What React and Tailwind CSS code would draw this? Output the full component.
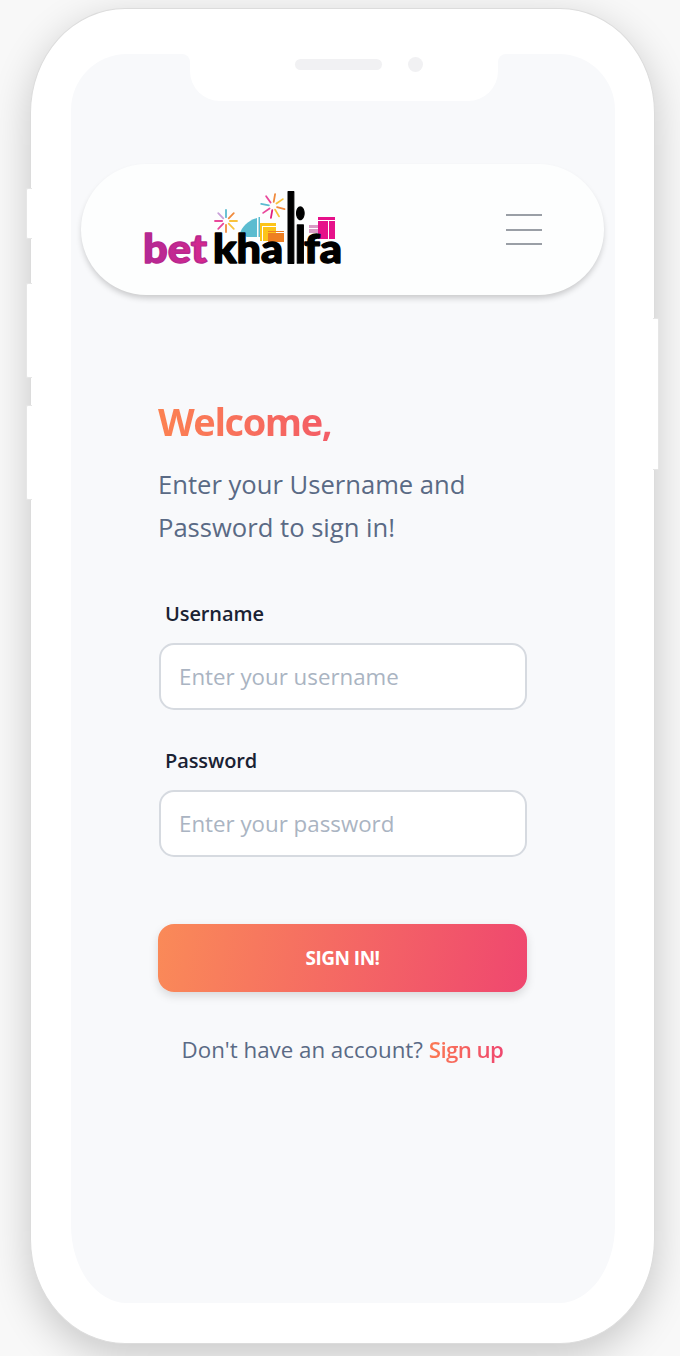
import React from 'react';

const Burst = ({ cx, cy, r, rays }) => (
  <g strokeWidth="1.8" strokeLinecap="round">
    {rays.map(([deg, color]) => {
      const a = (deg * Math.PI) / 180;
      return (
        <line
          key={deg}
          x1={cx + Math.cos(a) * r * 0.35}
          y1={cy + Math.sin(a) * r * 0.35}
          x2={cx + Math.cos(a) * r}
          y2={cy + Math.sin(a) * r}
          stroke={color}
        />
      );
    })}
  </g>
);

const Logo = () => (
  <svg width="200" height="90" viewBox="0 -6 200 90" className="block overflow-visible">
    <defs>
      <linearGradient id="bet" x1="0" y1="0" x2="1" y2="0">
        <stop offset="0" stopColor="#b02a96" />
        <stop offset="1" stopColor="#d8278c" />
      </linearGradient>
    </defs>
    <Burst cx={82} cy={30} r={11} rays={[[0, '#f9c23c'], [45, '#f9c23c'], [90, '#f08a3c'], [135, '#e9489b'], [180, '#e9489b'], [225, '#c9a0d8'], [270, '#5bbcd0'], [315, '#f08a3c']]} />
    <Burst cx={129} cy={15} r={12} rays={[[15, '#f08a3c'], [60, '#f9c23c'], [100, '#e0207f'], [145, '#e9489b'], [190, '#5bbcd0'], [235, '#e9489b'], [280, '#f08a3c'], [325, '#f9c23c']]} />
    {/* city skyline */}
    <path d="M96 43 C97 36 105 29 113 27 L113 46 L103 46 Z" fill="#5bbcd0" />
    <rect x="114.5" y="26" width="1.5" height="20" fill="#5bbcd0" />
    <rect x="116" y="32" width="16" height="18" fill="#fcc419" />
    <rect x="118" y="35" width="1" height="15" fill="#fff" />
    <rect x="119" y="35" width="13" height="1" fill="#fff" />
    <rect x="124" y="42" width="16" height="9" fill="#ee7f22" />
    <rect x="124" y="40" width="16" height="1" fill="#ee7f22" />
    <rect x="165" y="34" width="9" height="8" fill="#d99ac4" />
    <rect x="165" y="37" width="9" height="1" fill="#fff" />
    <rect x="174" y="26" width="17" height="22" fill="#e6118a" />
    <rect x="174" y="29" width="17" height="1" fill="#fff" />
    <rect x="184" y="30" width="1" height="18" fill="#fff" />
    <g fontFamily="Lato, sans-serif" fontWeight="900" fontSize="40" strokeLinejoin="round">
      <text x="-1" y="71.5" fill="url(#bet)" stroke="#b8288f" strokeWidth="1.4" textLength="64" lengthAdjust="spacingAndGlyphs">bet</text>
      <g fill="#000" stroke="#000" strokeWidth="1.4">
        <text x="69" y="71.5" textLength="70" lengthAdjust="spacingAndGlyphs">kha</text>
        <text transform="translate(141.5 71.5) scale(1.1 2.42)" fontSize="39" strokeWidth="0.9">l</text>
        <text transform="translate(150.5 71.5) scale(1.15 1.9)" fontSize="39" strokeWidth="0.9">i</text>
        <text x="160" y="71.5" textLength="38" lengthAdjust="spacingAndGlyphs">fa</text>
      </g>
    </g>
  </svg>
);

const Field = ({ label, placeholder, type, className }) => (
  <div className={className}>
    <label className="block pt-[1px] pl-[7px] text-[20px] leading-[28px] font-semibold tracking-[-0.1px] text-[#1a2233]">{label}</label>
    <input
      type={type}
      placeholder={placeholder}
      className="mt-[15px] ml-[1px] block h-[67px] w-[368px] rounded-[15px] border-2 border-[#d6dae0] bg-white px-[18px] text-[22.3px] text-[#1a2233] outline-none placeholder:text-[#aab4c2]"
    />
  </div>
);

export default function App() {
  return (
    <div className="h-[1356px] w-[680px] overflow-hidden bg-[#f8f8f8] pt-[8px] pl-[30px] font-['Open_Sans',sans-serif]">
      {/* phone body */}
      <div className="relative h-[1336px] w-[625px] rounded-[95px/105px] border border-[#dcdcdc] bg-white pt-[45px] pl-[40px] shadow-[0_12px_40px_rgba(0,0,0,0.2)]">
        {/* side buttons */}
        <div className="absolute top-[179px] left-[-5px] h-[51px] w-[6px] rounded-l-[2px] border border-r-0 border-[#e6e6e6] bg-white" />
        <div className="absolute top-[274px] left-[-5px] h-[95px] w-[6px] rounded-l-[2px] border border-r-0 border-[#e6e6e6] bg-white" />
        <div className="absolute top-[396px] left-[-5px] h-[95px] w-[6px] rounded-l-[2px] border border-r-0 border-[#e6e6e6] bg-white" />
        <div className="absolute top-[309px] right-[-5px] h-[152px] w-[6px] rounded-r-[2px] border border-l-0 border-[#e6e6e6] bg-white" />

        {/* screen */}
        <div className="relative h-[1249px] w-[544px] rounded-t-[56px] rounded-b-[56px_78px] bg-[#f8f9fb]">
          {/* notch */}
          <div className="absolute top-0 left-[119px] flex h-[47px] w-[308px] items-start rounded-b-[30px] bg-white pt-[3px]">
            <div className="absolute top-0 left-[-8px] h-[8px] w-[8px] bg-white">
              <div className="h-full rounded-tr-[8px] bg-[#f8f9fb]" />
            </div>
            <div className="absolute top-0 right-[-8px] h-[8px] w-[8px] bg-white">
              <div className="h-full rounded-tl-[8px] bg-[#f8f9fb]" />
            </div>
            <div className="mt-[2px] ml-[105px] h-[11px] w-[87px] rounded-full bg-[#f1f1f3]" />
            <div className="ml-[26px] h-[15px] w-[15px] rounded-full bg-[#f1f1f3]" />
          </div>

          <div className="pt-[110px] pl-[10px]">
            {/* header */}
            <div className="flex h-[131px] w-[523px] items-center justify-between rounded-[66px] bg-[#fdfefe] pr-[62px] pl-[63px] shadow-[0_4px_6px_-1px_rgba(0,0,0,0.2)]">
              <Logo />
              <div className="flex h-[31px] w-[36px] flex-col justify-between">
                <span className="block h-[2px] bg-[#9a9fa6]" />
                <span className="block h-[2px] bg-[#9a9fa6]" />
                <span className="block h-[2px] bg-[#9a9fa6]" />
              </div>
            </div>

            {/* form */}
            <div className="box-content w-[369px] pt-[98px] pl-[77px]">
              <h1 className="w-max bg-[linear-gradient(90deg,#fc8252,#f35c66)] bg-clip-text text-[38px] leading-[56px] font-bold tracking-[-1.4px] text-transparent">
                Welcome,
              </h1>
              <p className="mt-[14px] text-[25.6px] leading-[43px] text-[#5a6a85]">
                Enter your Username and
                <br />
                Password to sign in!
              </p>
              <Field label="Username" placeholder="Enter your username" type="text" className="mt-[50px]" />
              <Field label="Password" placeholder="Enter your password" type="password" className="mt-[36px]" />
              <button
                type="button"
                className="mt-[67px] block h-[68px] w-[369px] rounded-[16px] bg-[linear-gradient(100deg,#fa8a58,#ef476f)] text-[19px] font-bold tracking-[-0.5px] text-white shadow-[0_4px_10px_rgba(0,0,0,0.13)]"
              >
                SIGN IN!
              </button>
              <p className="mt-[40px] text-center text-[22.3px] leading-[36px] text-[#5a6a85]">
                Don't have an account?{' '}
                <a className="bg-[linear-gradient(90deg,#fb7a52,#ef476f)] bg-clip-text font-semibold tracking-[-0.6px] text-transparent">Sign up</a>
              </p>
            </div>
          </div>
        </div>
      </div>
    </div>
  );
}
